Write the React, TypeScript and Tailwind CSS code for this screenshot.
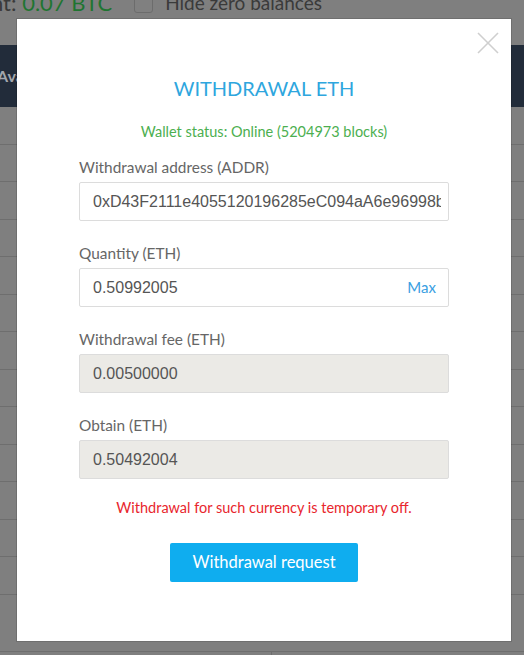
import React from "react";

const rows = Array.from({ length: 13 });

function Field({
  label,
  value,
  disabled,
  max,
}: {
  label: string;
  value: string;
  disabled?: boolean;
  max?: boolean;
}) {
  return (
    <div className="flex flex-col">
      <div className="h-[20px] text-[15.4px] leading-[20px] text-[#666666]">{label}</div>
      <div
        className={
          "mt-[5px] flex h-[39px] items-center rounded-[2px] border border-[#dcdcdc] pl-[13px] pr-[7px] " +
          (disabled ? "bg-[#ebeae6]" : "bg-white")
        }
      >
        <div
          className="min-w-0 flex-1 overflow-hidden whitespace-nowrap text-[16px] text-[#555555]"
          style={{ fontFamily: '"Liberation Sans", Arial, sans-serif' }}
        >
          {value}
        </div>
        {max && <div className="ml-2 mr-[5px] text-[15px] text-[#3aa0e2]">Max</div>}
      </div>
    </div>
  );
}

export default function App() {
  return (
    <div
      className="relative h-[655px] w-[524px] overflow-hidden bg-[#7f7f7f]"
      style={{ fontFamily: 'Lato, "Noto Sans", sans-serif' }}
    >
      {/* background page header */}
      <div className="h-[45px] overflow-hidden">
        <div className="-mt-[11px] flex items-center whitespace-nowrap">
          <span className="-ml-[9px] text-[22px] leading-[28px] text-[#3a3a3a]">
            nt: <span className="text-[#1f7531]">0.07 BTC</span>
          </span>
          <span className="ml-[22px] h-[19px] w-[19px] rounded-[3px] border border-[#6c6c6c] bg-[#808080]" />
          <span className="ml-[12px] text-[19px] leading-[28px] text-[#3a3a3a]">Hide zero balances</span>
        </div>
      </div>
      {/* dark bar */}
      <div className="flex h-[62px] items-center bg-[#222c3a]">
        <span className="-ml-[3px] text-[16px] font-bold text-[#a3a7ad]">Available</span>
      </div>
      {/* table rows */}
      <div className="flex flex-col">
        {rows.map((_, i) => (
          <div key={i} className="h-[37.5px] border-b border-[#6e6e6e]" />
        ))}
        <div className="h-[57px] border-b border-[#6e6e6e]" />
        <div className="flex h-[20px]">
          <div className="w-[272px] border-r border-[#6e6e6e]" />
        </div>
      </div>

      {/* modal */}
      <div className="absolute left-[17px] top-[19px] h-[622px] w-[494px] bg-white shadow-[0_0_0_1px_rgba(0,0,0,0.12)]">
        <svg
          className="absolute right-[12px] top-[13px]"
          width="22"
          height="22"
          viewBox="0 0 22 22"
          fill="none"
          stroke="#cfcfcf"
          strokeWidth="1.6"
        >
          <line x1="1" y1="1" x2="21" y2="21" />
          <line x1="21" y1="1" x2="1" y2="21" />
        </svg>
        <div className="flex flex-col px-[62px] pt-[55px]">
          <div className="text-center text-[20px] leading-[28px] text-[#2ea6de]">WITHDRAWAL ETH</div>
          <div className="mt-[20px] text-center text-[14.5px] leading-[20px] text-[#4caf50]">
            Wallet status: Online (5204973 blocks)
          </div>
          <div className="mt-[15px] flex flex-col gap-[22px]">
            <Field label="Withdrawal address (ADDR)" value="0xD43F2111e4055120196285eC094aA6e96998b4f1" />
            <Field label="Quantity (ETH)" value="0.50992005" max />
            <Field label="Withdrawal fee (ETH)" value="0.00500000" disabled />
            <Field label="Obtain (ETH)" value="0.50492004" disabled />
          </div>
          <div className="mt-[19px] text-center text-[14.5px] leading-[20px] text-[#e8262d]">
            Withdrawal for such currency is temporary off.
          </div>
          <div className="mt-[25px] flex justify-center">
            <button className="h-[39px] w-[188px] rounded-[2px] bg-[#0fadef] text-[16.5px] text-white">
              Withdrawal request
            </button>
          </div>
        </div>
      </div>
    </div>
  );
}
